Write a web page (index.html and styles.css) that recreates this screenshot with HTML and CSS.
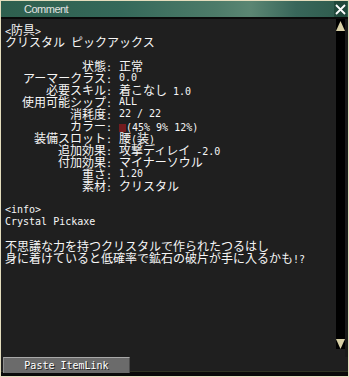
FILE: index.html
```html
<!DOCTYPE html>
<html lang="ja">
  <head>
    <meta charset="UTF-8" />
    <title>Comment</title>
    <link rel="stylesheet" href="styles.css">
  </head>
  <body>
    <div class="window">
      <div class="titlebar">
        <span class="title">Comment</span>
        <span class="close">
          <svg width="11" height="11" viewBox="0 0 11 11">
            <path d="M1 1 L10 10 M10 1 L1 10" stroke="#fff" stroke-width="1.8" fill="none" />
          </svg>
        </span>
      </div>

      <div class="main">
        <div class="content">
          <div class="line"><span class="a">&lt;</span>防具<span class="a">&gt;</span></div>
          <div class="line">クリスタル<span class="a"> </span>ピックアックス</div>
          <div class="line"></div>

          <div class="stats">
            <span class="label">状態<span class="a">:</span></span><span>正常</span>
            <span class="label">アーマークラス<span class="a">:</span></span><span class="a">0.0</span>
            <span class="label">必要スキル<span class="a">:</span></span><span>着こなし<span class="a"> 1.0</span></span>
            <span class="label">使用可能シップ<span class="a">:</span></span><span class="a">ALL</span>
            <span class="label">消耗度<span class="a">:</span></span><span class="a">22 / 22</span>
            <span class="label">カラー<span class="a">:</span></span><span><i class="swatch"></i><span class="a">(45% 9% 12%)</span></span>
            <span class="label">装備スロット<span class="a">:</span></span><span>腰<span class="a">(</span>装<span class="a">)</span></span>
            <span class="label">追加効果<span class="a">:</span></span><span>攻撃ディレイ<span class="a"> -2.0</span></span>
            <span class="label">付加効果<span class="a">:</span></span><span>マイナーソウル</span>
            <span class="label">重さ<span class="a">:</span></span><span class="a">1.20</span>
            <span class="label">素材<span class="a">:</span></span><span>クリスタル</span>
          </div>

          <div class="line"></div>
          <div class="line a">&lt;info&gt;</div>
          <div class="line a">Crystal Pickaxe</div>
          <div class="line"></div>
          <div class="line">不思議な力を持つクリスタルで作られたつるはし</div>
          <div class="line">身に着けていると低確率で鉱石の破片が手に入るかも<span class="a">!?</span></div>
        </div>

        <div class="scrollbar">
          <svg width="9" height="10" viewBox="0 0 9 10">
            <polygon points="4.5,0 9,10 0,10" fill="#d8d0a6" />
          </svg>
          <svg width="9" height="10" viewBox="0 0 9 10">
            <polygon points="0,0 9,0 4.5,10" fill="#d8d0a6" />
          </svg>
        </div>
        <div class="edge"></div>
      </div>

      <div class="footer">
        <button class="btn">Paste ItemLink</button>
      </div>
    </div>
  </body>
</html>
```

FILE: styles.css
```css
* {
  box-sizing: border-box;
}

body {
  margin: 0;
  background-color: #e4ddbd;
  font-family: "Noto Sans CJK JP", sans-serif;
}

.window {
  width: 349px;
  height: 377px;
  border: 1px solid #e4ddbd;
  background-color: #0a0a0a;
  display: flex;
  flex-direction: column;
}

.titlebar {
  height: 16px;
  display: flex;
  align-items: center;
  background: linear-gradient(to right, #2e5f4e 0%, #35695a 35%, #4d7b69 62%, #5b8673 72%, #38665a 85%, #2d5a4b 100%);
}

.title {
  flex: 1;
  padding-left: 23px;
  color: #e2e2e2;
  font-family: "Liberation Sans", sans-serif;
  font-size: 11px;
  letter-spacing: -0.5px;
}

.close {
  width: 13px;
  height: 16px;
  margin-right: 1px;
  background-color: #21493c;
  display: flex;
  align-items: center;
  justify-content: center;
}

.main {
  margin-top: 2px;
  height: 338px;
  display: flex;
  background-color: #1f1f1f;
}

.content {
  flex: 1;
  padding: 5px 0 0 4px;
  color: #f6f6f6;
  font-size: 12px;
  line-height: 12px;
}

.line {
  height: 12px;
  white-space: pre;
}

.a {
  font-family: "DejaVu Sans Mono", monospace;
  font-size: 10px;
  line-height: 12px;
  white-space: pre;
}

.stats {
  display: grid;
  grid-template-columns: 107px 1fr;
  column-gap: 7px;
  grid-auto-rows: 12px;
}

.label {
  text-align: right;
}

.swatch {
  display: inline-block;
  width: 7px;
  height: 8px;
  background-color: #731c1f;
  vertical-align: -1px;
}

.scrollbar {
  width: 9px;
  height: 330px;
  padding-top: 2px;
  background-color: #000;
  display: flex;
  flex-direction: column;
  justify-content: space-between;
}

.scrollbar svg {
  display: block;
}

.edge {
  width: 3px;
  background-color: #1a1a1a;
}

.footer {
  height: 19px;
  padding-left: 2px;
  background: linear-gradient(to bottom, #1f1f1f 14px, #2f3322 14px, #2f3322 15px, #0a0a0a 15px);
}

.btn {
  display: block;
  width: 127px;
  height: 16px;
  padding: 0;
  border: none;
  border-top: 1px solid #a9a9a9;
  border-left: 1px solid #8e8e8e;
  border-right: 1px solid #4a4a4a;
  background-color: #6b6b6b;
  color: #fff;
  font-family: "DejaVu Sans Mono", monospace;
  font-size: 10px;
  line-height: 14px;
  text-shadow: 1px 1px 0 #222;
  cursor: pointer;
}
```
